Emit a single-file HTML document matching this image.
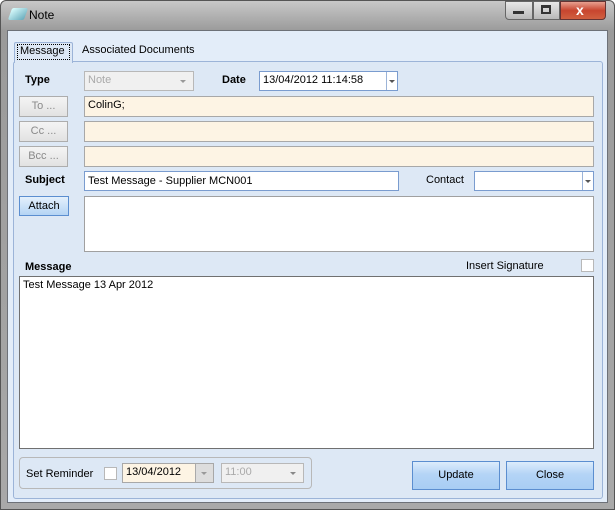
<html><head><style>
body{margin:0;width:615px;height:510px;overflow:hidden;font-family:"Liberation Sans",sans-serif;font-size:11px;background:#fff}
div{position:absolute;box-sizing:border-box}
.t{white-space:nowrap}
.b{font-weight:bold}
.btn{border:1px solid #adadad;background:linear-gradient(#f4f4f4,#e2e2e2);color:#8a8a8a;text-align:center;line-height:18px}
.fld{border:1px solid #a8a8a8;background:#fdf4e4;padding-left:3px;line-height:17px}
.wb{background:#fff}
.blue{border:1px solid #7a9ccf}
.arr{width:0;height:0;border-left:3px solid transparent;border-right:3px solid transparent;border-top:3px solid #555}
</style></head><body>
<div style="left:0;top:0;width:615px;height:510px;background:linear-gradient(#c8c8c8,#9a9a9a 30px,#a9a9a9);border:1px solid #555;border-radius:6px 6px 0 0"></div>
<div style="left:10px;top:8px;width:16px;height:12px;background:linear-gradient(135deg,#dff,#6ab);transform:skewX(-20deg);border-radius:2px"></div>
<div class="t" style="left:29px;top:8px;font-size:12px;color:#000">Note</div>
<div style="left:505px;top:1px;width:28px;height:19px;border:1px solid #666;border-radius:0 0 0 4px;background:linear-gradient(#e8e8e8,#b8b8b8)"></div>
<div style="left:513px;top:11px;width:11px;height:3px;background:#333"></div>
<div style="left:533px;top:1px;width:27px;height:19px;border:1px solid #666;background:linear-gradient(#e8e8e8,#b8b8b8)"></div>
<div style="left:541px;top:5px;width:10px;height:9px;border:2px solid #333;border-top-width:3px"></div>
<div style="left:560px;top:1px;width:46px;height:19px;border:1px solid #633;border-radius:0 0 4px 0;background:linear-gradient(#e8a090,#c8452f 50%,#d06040)"></div>
<div class="t b" style="left:576px;top:2px;color:#fff;font-size:14px">x</div>
<div style="left:7px;top:30px;width:601px;height:473px;background:#e3edf9;border:1px solid #6d7178"></div>
<div style="left:13px;top:61px;width:590px;height:438px;background:#dde8f5;border:1px solid #9cb4d8;border-radius:3px"></div>
<div style="left:14px;top:42px;width:59px;height:21px;background:#dde8f5;border:1px solid #9cb4d8;border-bottom:none;border-radius:2px 2px 0 0"></div>
<div style="left:17px;top:44px;width:53px;height:16px;border:1px dotted #000"></div>
<div class="t" style="left:20px;top:45px">Message</div>
<div class="t" style="left:82px;top:44px">Associated Documents</div>
<div class="t b" style="left:25px;top:74px">Type</div>
<div style="left:84px;top:71px;width:110px;height:20px;border:1px solid #b8b8b8;background:#f0f0f0"></div>
<div class="t" style="left:88px;top:74px;color:#aaa">Note</div>
<div class="arr" style="left:180px;top:80px;border-top-color:#999"></div>
<div class="t b" style="left:222px;top:74px">Date</div>
<div class="blue wb" style="left:259px;top:71px;width:139px;height:20px"></div>
<div class="t" style="left:263px;top:74px">13/04/2012 11:14:58</div>
<div style="left:386px;top:72px;width:1px;height:18px;background:#9cb4d8"></div>
<div class="arr" style="left:389px;top:80px"></div>
<div class="btn" style="left:19px;top:96px;width:49px;height:21px">To ...</div>
<div class="fld" style="left:84px;top:96px;width:510px;height:21px">ColinG;</div>
<div class="btn" style="left:19px;top:121px;width:49px;height:21px">Cc ...</div>
<div class="fld" style="left:84px;top:121px;width:510px;height:21px"></div>
<div class="btn" style="left:19px;top:146px;width:49px;height:21px">Bcc ...</div>
<div class="fld" style="left:84px;top:146px;width:510px;height:21px"></div>
<div class="t b" style="left:25px;top:174px">Subject</div>
<div class="blue wb" style="left:84px;top:171px;width:315px;height:20px;padding-left:3px;line-height:18px">Test Message - Supplier MCN001</div>
<div class="t" style="left:426px;top:174px">Contact</div>
<div class="blue wb" style="left:474px;top:171px;width:120px;height:20px"></div>
<div style="left:582px;top:172px;width:1px;height:18px;background:#9cb4d8"></div>
<div class="arr" style="left:585px;top:180px"></div>
<div style="left:19px;top:196px;width:50px;height:20px;border:1px solid #5b8ed0;background:linear-gradient(#e4f0fc,#b4d4f4);text-align:center;line-height:18px">Attach</div>
<div class="wb" style="left:84px;top:196px;width:510px;height:56px;border:1px solid #a0a0a0"></div>
<div class="t b" style="left:25px;top:261px">Message</div>
<div class="t" style="left:466px;top:260px">Insert Signature</div>
<div class="wb" style="left:581px;top:259px;width:13px;height:13px;border:1px solid #b8b8b8"></div>
<div class="wb" style="left:19px;top:276px;width:575px;height:173px;border:1px solid #707070;padding:2px 3px">Test Message 13 Apr 2012</div>
<div style="left:19px;top:457px;width:293px;height:32px;border:1px solid #b8b8b8;border-radius:4px"></div>
<div class="t" style="left:26px;top:468px">Set Reminder</div>
<div class="wb" style="left:104px;top:467px;width:13px;height:13px;border:1px solid #b8b8b8"></div>
<div style="left:122px;top:463px;width:92px;height:20px;border:1px solid #a8a8a8;background:#fdf4e4"></div>
<div class="t" style="left:126px;top:466px">13/04/2012</div>
<div style="left:195px;top:464px;width:18px;height:18px;background:#ddd;border-left:1px solid #aaa"></div>
<div class="arr" style="left:201px;top:472px;border-top-color:#999"></div>
<div style="left:221px;top:463px;width:83px;height:20px;border:1px solid #b8b8b8;background:#f0f0f0"></div>
<div class="t" style="left:225px;top:466px;color:#aaa">11:00</div>
<div class="arr" style="left:290px;top:472px;border-top-color:#888"></div>
<div style="left:412px;top:461px;width:88px;height:29px;border:1px solid #5b8ed0;background:linear-gradient(#dcecfc,#b4d4f6 45%,#a8cdf4);text-align:center;line-height:27px">Update</div>
<div style="left:506px;top:461px;width:88px;height:29px;border:1px solid #5b8ed0;background:linear-gradient(#dcecfc,#b4d4f6 45%,#a8cdf4);text-align:center;line-height:27px">Close</div>
</body></html>
